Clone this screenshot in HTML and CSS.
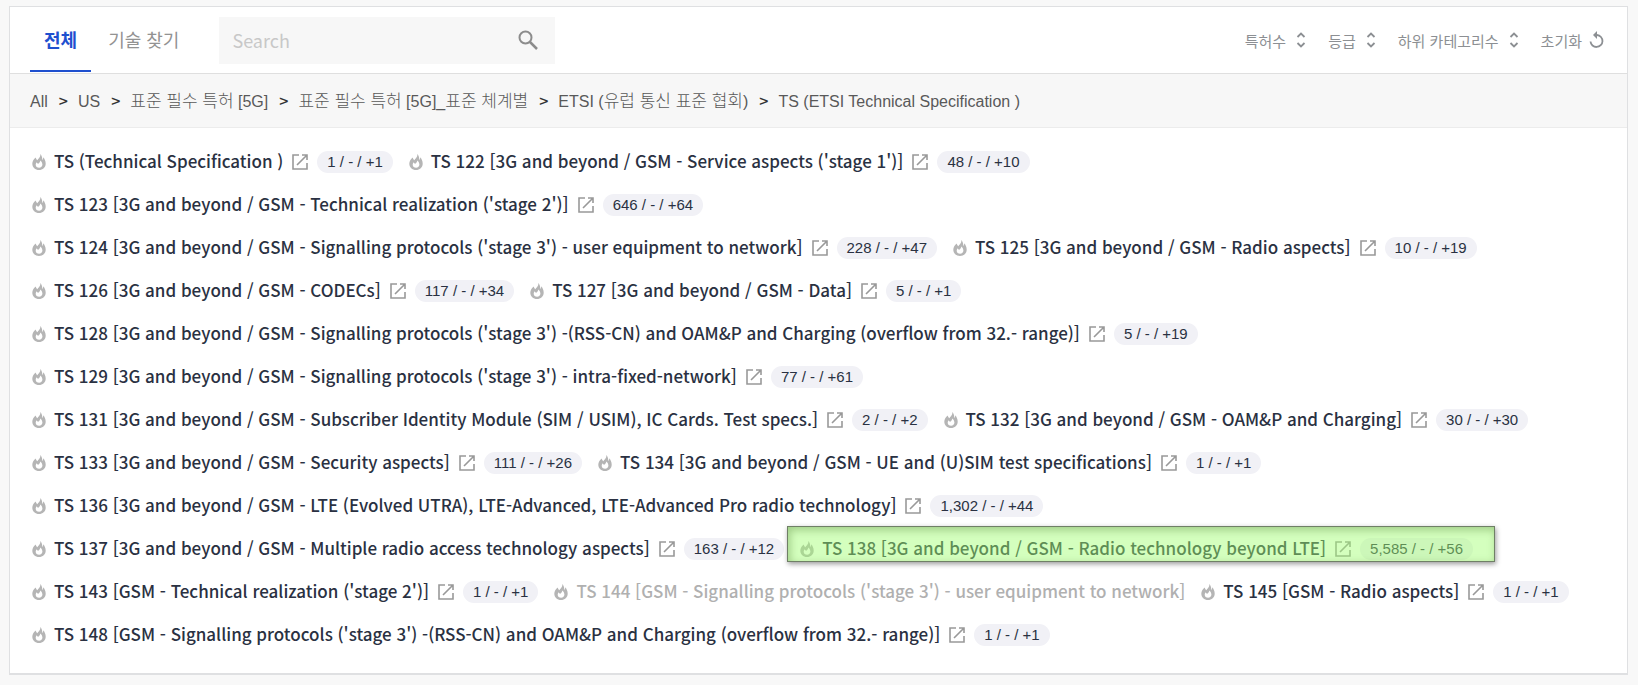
FILE: index.html
```
<!DOCTYPE html>
<html lang="ko">
<head>
    <meta charset="utf-8">
    <title>기술 찾기</title>
    <link rel="stylesheet" href="styles.css">
</head>
<body>
    <svg class="sprite" aria-hidden="true">
        <symbol id="flame" viewBox="0 0 16 16">
            <path fill-rule="evenodd" d="M9.200 0c.5 2-.4 3.300-1.500 4.500-.5.6-1 1.100-1.300 1.800C5.500 5.600 5 4.800 4.800 3.500 2.700 5.200 1.300 7.400 1.300 9.700 1.300 13.300 4.300 16 8 16s6.700-2.700 6.700-6.300c0-2.500-1-4.700-2.500-6.400.1 1.200-.2 2.100-.9 2.700C11.300 3.700 10.900 1.400 9.200 0zM9.400 6.400c1.400 1.300 2 2.800 2 4.200 0 1.900-1.400 3.100-3.300 3.100s-3.400-1.200-3.400-3c0-.9.3-1.700.9-2.400.3.900.9 1.300 1.600 1.500 1-.9 1.900-2 2.200-3.400z"/>
        </symbol>
        <symbol id="open" viewBox="0 0 16 16">
            <path d="M7 1H1v14h14V9M10 1h5v5M15 1 5 11" fill="none" stroke="currentColor" stroke-width="1.6"/>
        </symbol>
        <symbol id="sort" viewBox="0 0 10 16">
            <path d="M1.500 5 5 1.500 8.500 5M1.500 11 5 14.500 8.500 11" fill="none" stroke="currentColor" stroke-width="1.8"/>
        </symbol>
    </svg>

    <div class="card">
        <div class="toolbar">
            <div class="tabs">
                <button class="tab active">전체</button>
                <button class="tab">기술 찾기</button>
            </div>
            <form class="search">
                <input type="text" placeholder="Search" aria-label="Search">
                <button type="button" class="search-btn" aria-label="Search">
                    <svg width="22" height="22" viewBox="0 0 22 22"><circle cx="8.5" cy="8.5" r="6" fill="none" stroke="currentColor" stroke-width="2"/><path d="M13 13l7 7" stroke="currentColor" stroke-width="2.5"/></svg>
                </button>
            </form>
            <div class="sorts">
                <button class="sort">특허수 <svg class="sort-icon"><use href="#sort"/></svg></button>
                <button class="sort">등급 <svg class="sort-icon"><use href="#sort"/></svg></button>
                <button class="sort">하위 카테고리수 <svg class="sort-icon"><use href="#sort"/></svg></button>
                <button class="sort reset">초기화 <svg class="reset-icon" viewBox="0 0 16 18"><path d="M7 4h1a6 6 0 1 1-6.500 6.500" fill="none" stroke="currentColor" stroke-width="1.8"/><path d="M8 0v8L4 4z" fill="currentColor"/></svg></button>
            </div>
        </div>

        <nav class="breadcrumb">
            <a href="#">All</a>
            <a href="#">US</a>
            <a href="#"><span class="ko">표준 필수 특허</span> [5G]</a>
            <a href="#"><span class="ko">표준 필수 특허</span> [5G]_<span class="ko">표준 체계별</span></a>
            <a href="#">ETSI (<span class="ko">유럽 통신 표준 협회</span>)</a>
            <a href="#">TS (ETSI Technical Specification )</a>
        </nav>

        <ul class="list" id="list"></ul>
    </div>

    <script src="script.js"></script>
</body>
</html>
```
FILE: styles.css
```
* {
    box-sizing: border-box;
}
body {
    margin: 0;
    padding: 6px 10px 10px 9px;
    background: #f8f8f8;
    font-family: "Noto Sans CJK KR", sans-serif;
    color: #2a3142;
}
button {
    padding: 0;
    border: none;
    background: none;
    font-family: inherit;
    cursor: pointer;
}
a {
    color: inherit;
    text-decoration: none;
}
.sprite {
    display: none;
}
.card {
    background: #fff;
    border: 1px solid #dfe0e2;
    border-bottom-width: 2px;
}
.toolbar {
    display: flex;
    align-items: center;
    height: 67px;
    padding: 0 22px 0 20px;
    border-bottom: 1px solid #dfdfdf;
}
.tabs {
    display: flex;
    align-self: stretch;
    gap: 3px;
    margin-bottom: 1px;
}
.tab {
    padding: 0 14px;
    border-bottom: 2px solid transparent;
    font-size: 18px;
    color: #929292;
}
.tab.active {
    color: #1f50cf;
    border-color: #1f50cf;
    font-weight: 700;
}
.search {
    display: flex;
    align-items: center;
    width: 336px;
    height: 47px;
    margin-left: 26px;
    padding: 0 16px 0 13px;
    background: #f7f7f7;
}
.search input {
    flex: 1;
    min-width: 0;
    padding: 0;
    border: none;
    outline: none;
    background: none;
    font-family: inherit;
    font-size: 18px;
}
.search input::placeholder {
    color: #c8c8c8;
}
.search-btn {
    display: flex;
    color: #8c8c8c;
}
.sorts {
    display: flex;
    gap: 22px;
    margin-left: auto;
}
.sort {
    display: flex;
    align-items: center;
    gap: 10px;
    font-size: 15px;
    color: #8c8f93;
}
.sort-icon {
    width: 10px;
    height: 16px;
}
.reset {
    gap: 7px;
}
.reset-icon {
    width: 16px;
    height: 18px;
}
.breadcrumb {
    display: flex;
    align-items: baseline;
    height: 54px;
    padding: 15px 20px 0;
    background: #f7f7f7;
    border-bottom: 1px solid #ececec;
    font-family: "Liberation Sans", "Noto Sans CJK KR", sans-serif;
    font-size: 16px;
    line-height: 22px;
    color: #595959;
}
.breadcrumb a + a::before {
    content: ">";
    margin: 0 10px 0 11px;
    font-family: "Noto Sans CJK KR", sans-serif;
    font-weight: 500;
    color: #333;
}
.ko {
    font-size: 17px;
    font-weight: 300;
}
.list {
    display: flex;
    flex-wrap: wrap;
    column-gap: 15px;
    margin: 0;
    padding: 11px 21px 18px;
    list-style: none;
}
.item {
    position: relative;
    display: flex;
    align-items: center;
    height: 43px;
}
.flame {
    width: 16px;
    height: 16px;
    margin: 2px 7px 0 0;
    color: #b5b5b5;
    fill: currentColor;
}
.name {
    font-size: 17px;
    line-height: 24px;
    font-weight: 500;
}
.open {
    display: flex;
    margin: 2px 9px 0;
    color: #999;
}
.open svg {
    width: 16px;
    height: 16px;
}
.count {
    margin-top: 2px;
    padding: 0 10px;
    border-radius: 11px;
    background: #f1f1f6;
    font-family: "Liberation Sans", sans-serif;
    font-size: 15px;
    line-height: 22px;
}
.disabled .name {
    color: #b0b0b0;
}
.marked::after {
    content: "";
    position: absolute;
    inset: 0 -22px 7px -12px;
    border: 1px solid #6f7f66;
    background: rgba(160, 255, 110, 0.45);
    box-shadow: 1px 2px 5px rgba(0, 0, 0, 0.4), inset 2px 3px 8px rgba(60, 110, 30, 0.35);
    pointer-events: none;
}
```
FILE: script.js
```
const items = [
    { name: "TS (Technical Specification )", count: "1 / - / +1" },
    { name: "TS 122 [3G and beyond / GSM - Service aspects ('stage 1')]", count: "48 / - / +10" },
    { name: "TS 123 [3G and beyond / GSM - Technical realization ('stage 2')]", count: "646 / - / +64" },
    { name: "TS 124 [3G and beyond / GSM - Signalling protocols ('stage 3') - user equipment to network]", count: "228 / - / +47" },
    { name: "TS 125 [3G and beyond / GSM - Radio aspects]", count: "10 / - / +19" },
    { name: "TS 126 [3G and beyond / GSM - CODECs]", count: "117 / - / +34" },
    { name: "TS 127 [3G and beyond / GSM - Data]", count: "5 / - / +1" },
    { name: "TS 128 [3G and beyond / GSM - Signalling protocols ('stage 3') -(RSS-CN) and OAM&P and Charging (overflow from 32.- range)]", count: "5 / - / +19" },
    { name: "TS 129 [3G and beyond / GSM - Signalling protocols ('stage 3') - intra-fixed-network]", count: "77 / - / +61" },
    { name: "TS 131 [3G and beyond / GSM - Subscriber Identity Module (SIM / USIM), IC Cards. Test specs.]", count: "2 / - / +2" },
    { name: "TS 132 [3G and beyond / GSM - OAM&P and Charging]", count: "30 / - / +30" },
    { name: "TS 133 [3G and beyond / GSM - Security aspects]", count: "111 / - / +26" },
    { name: "TS 134 [3G and beyond / GSM - UE and (U)SIM test specifications]", count: "1 / - / +1" },
    { name: "TS 136 [3G and beyond / GSM - LTE (Evolved UTRA), LTE-Advanced, LTE-Advanced Pro radio technology]", count: "1,302 / - / +44" },
    { name: "TS 137 [3G and beyond / GSM - Multiple radio access technology aspects]", count: "163 / - / +12" },
    { name: "TS 138 [3G and beyond / GSM - Radio technology beyond LTE]", count: "5,585 / - / +56", state: "marked" },
    { name: "TS 143 [GSM - Technical realization ('stage 2')]", count: "1 / - / +1" },
    { name: "TS 144 [GSM - Signalling protocols ('stage 3') - user equipment to network]", state: "disabled" },
    { name: "TS 145 [GSM - Radio aspects]", count: "1 / - / +1" },
    { name: "TS 148 [GSM - Signalling protocols ('stage 3') -(RSS-CN) and OAM&P and Charging (overflow from 32.- range)]", count: "1 / - / +1" }
];

const list = document.getElementById("list");

items.forEach(item => {
    const li = document.createElement("li");
    li.className = "item " + (item.state || "");
    li.innerHTML = '<svg class="flame"><use href="#flame"/></svg><a class="name" href="#"></a>';
    li.querySelector(".name").textContent = item.name;
    if (item.count) {
        li.insertAdjacentHTML("beforeend",
            `<a class="open" href="#" aria-label="Open"><svg><use href="#open"/></svg></a><span class="count">${item.count}</span>`);
    }
    list.appendChild(li);
});
```
